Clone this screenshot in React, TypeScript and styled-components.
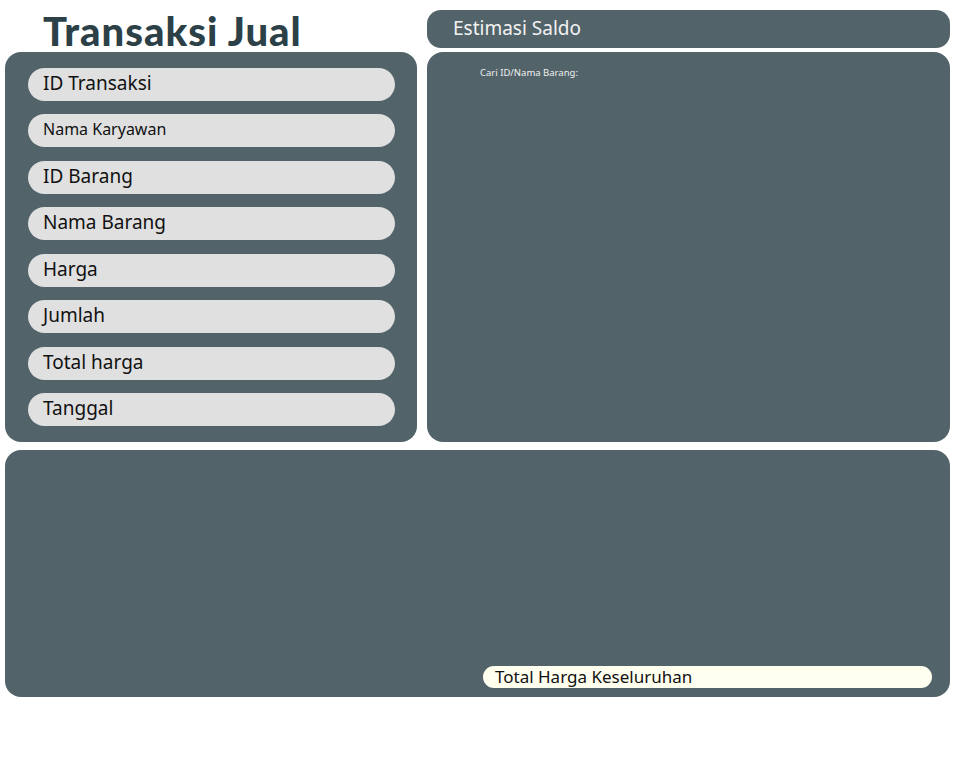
import React from "react";
import styled, { createGlobalStyle } from "styled-components";

const Global = createGlobalStyle`
  html, body { margin: 0; padding: 0; background: #ffffff; }
  body { font-family: "Noto Sans", "Open Sans", sans-serif; }
`;

const Page = styled.div`
  display: grid;
  grid-template-columns: 412px 523px;
  grid-template-rows: 38px 394px 255px;
  column-gap: 10px;
  padding: 10px 0 0 5px;
  width: 973px;
  box-sizing: border-box;
`;

const Title = styled.h1`
  margin: 0;
  padding-left: 38px;
  font-family: "Lato", sans-serif;
  font-weight: 900;
  font-size: 40px;
  line-height: 42px;
  color: #2c4147;
  letter-spacing: 1px;
`;

const SaldoBar = styled.div`
  background: #52646a;
  border-radius: 14px;
  display: flex;
  align-items: center;
  padding: 0 0 2px 26px;
  color: #f2f2f2;
  font-size: 19px;
  height: 38px;
  box-sizing: border-box;
`;

const Panel = styled.div<{ $span?: boolean }>`
  background: #52646a;
  border-radius: 16px;
  margin-top: 4px;
  box-sizing: border-box;
  ${(p) => (p.$span ? "grid-column: 1 / 3; margin-top: 8px;" : "")}
`;

const FieldList = styled(Panel)`
  display: flex;
  flex-direction: column;
  justify-content: space-between;
  padding: 16px 22px 16px 23px;
`;

const Field = styled.div<{ $small?: boolean }>`
  height: 33px;
  border-radius: 17px;
  background: #e0e0e0;
  display: flex;
  align-items: center;
  padding: 0 0 3px 15px;
  box-sizing: border-box;
  color: #111;
  font-size: ${(p) => (p.$small ? "16px" : "19px")};
`;

const SearchPanel = styled(Panel)`
  padding: 7px 0 0 53px;
`;

const SearchLabel = styled.span`
  color: #f0f0f0;
  font-size: 9.5px;
`;

const BottomPanel = styled(Panel)`
  display: flex;
  align-items: flex-end;
  justify-content: flex-end;
  padding: 0 18px 9px 0;
`;

const TotalField = styled.div`
  width: 449px;
  height: 22px;
  border-radius: 11px;
  background: #fffff0;
  display: flex;
  align-items: center;
  padding: 0 0 2px 12px;
  box-sizing: border-box;
  color: #111;
  font-size: 17px;
`;

const fields: { label: string; small?: boolean }[] = [
  { label: "ID Transaksi" },
  { label: "Nama Karyawan", small: true },
  { label: "ID Barang" },
  { label: "Nama Barang" },
  { label: "Harga" },
  { label: "Jumlah" },
  { label: "Total harga" },
  { label: "Tanggal" },
];

export default function App() {
  return (
    <>
      <Global />
      <Page>
        <Title>Transaksi Jual</Title>
        <SaldoBar>Estimasi Saldo</SaldoBar>
        <FieldList>
          {fields.map((f) => (
            <Field key={f.label} $small={f.small}>
              {f.label}
            </Field>
          ))}
        </FieldList>
        <SearchPanel>
          <SearchLabel>Cari ID/Nama Barang:</SearchLabel>
        </SearchPanel>
        <BottomPanel $span>
          <TotalField>Total Harga Keseluruhan</TotalField>
        </BottomPanel>
      </Page>
    </>
  );
}
